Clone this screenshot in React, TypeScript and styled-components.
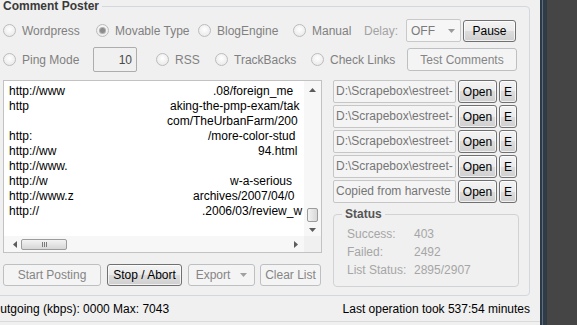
import React from "react";
import styled, { createGlobalStyle } from "styled-components";

const GlobalStyle = createGlobalStyle`
  html, body {
    margin: 0;
    padding: 0;
  }
  body {
    width: 577px;
    height: 325px;
    overflow: hidden;
    background: #454545;
    font-family: "Liberation Sans", Arial, sans-serif;
    font-size: 12px;
  }
`;

const Screen = styled.div`
  display: flex;
  width: 577px;
  height: 325px;
  overflow: hidden;
`;

const Window = styled.div`
  width: 540px;
  height: 325px;
  flex-shrink: 0;
  background: #f0f0f0;
  display: flex;
  flex-direction: column;
  overflow: hidden;
`;

const FrameEdge = styled.div`
  width: 7px;
  flex-shrink: 0;
  background: linear-gradient(
    to right,
    #2c3a48 0 2px,
    #5d6d7d 2px 3px,
    #2f3b47 3px
  );
`;

const Desktop = styled.div`
  flex: 1;
  background: #454545;
`;

const Panel = styled.fieldset`
  margin: 0 0 0 -6px;
  width: 536px;
  height: 296px;
  min-width: 0;
  flex-shrink: 0;
  box-sizing: border-box;
  border: 1px solid #d2d8dd;
  border-radius: 4px;
  padding: 8px 10px 0 8px;
`;

const Legend = styled.legend`
  padding: 0 3px;
  margin-left: -3px;
  font-weight: bold;
  font-size: 12px;
  line-height: 12px;
  color: #3a3a3a;
`;

const OptionRow = styled.div<{ $h: number; $mt?: number }>`
  display: flex;
  align-items: center;
  height: ${(p) => p.$h}px;
  margin-top: ${(p) => p.$mt ?? 0}px;
`;

const RadioItem = styled.label<{ $w: number }>`
  display: flex;
  align-items: center;
  gap: 6px;
  width: ${(p) => p.$w}px;
  flex-shrink: 0;
  color: #808080;
  white-space: nowrap;
`;

const RadioDot = styled.span<{ $on?: boolean }>`
  width: 11px;
  height: 11px;
  border-radius: 50%;
  border: 1px solid #bcbcbc;
  background: radial-gradient(circle at 50% 40%, #ffffff 0%, #e4e4e4 100%);
  display: flex;
  align-items: center;
  justify-content: center;
  flex-shrink: 0;
  &::after {
    content: "";
    width: 5px;
    height: 5px;
    border-radius: 50%;
    background: ${(p) => (p.$on ? "#8c8c8c" : "transparent")};
    box-shadow: ${(p) => (p.$on ? "0 0 0 1px #b0b0b0" : "none")};
  }
`;

const FieldLabel = styled.span<{ $w: number }>`
  width: ${(p) => p.$w}px;
  flex-shrink: 0;
  color: #a3a3a3;
`;

const Select = styled.div`
  width: 55px;
  height: 23px;
  box-sizing: border-box;
  border: 1px solid #c9c9c9;
  border-radius: 2px;
  background: #f6f6f6;
  color: #7b7b7b;
  display: flex;
  align-items: center;
  justify-content: space-between;
  padding: 0 5px 0 4px;
  margin-right: 2px;
  flex-shrink: 0;
`;

const NumberBox = styled.div`
  width: 44px;
  height: 25px;
  box-sizing: border-box;
  border: 1px solid #adadad;
  border-radius: 2px;
  background: #f0f0f0;
  color: #4a4a4a;
  display: flex;
  align-items: center;
  justify-content: flex-end;
  padding-right: 4px;
  margin-right: 19px;
  flex-shrink: 0;
`;

const Button = styled.div<{ $w: number; $h?: number; $off?: boolean }>`
  width: ${(p) => p.$w}px;
  height: ${(p) => p.$h ?? 22}px;
  box-sizing: border-box;
  flex-shrink: 0;
  display: flex;
  align-items: center;
  justify-content: center;
  gap: 10px;
  border-radius: 3px;
  white-space: nowrap;
  border: 1px solid ${(p) => (p.$off ? "#bcc0c3" : "#707070")};
  background: ${(p) =>
    p.$off
      ? "#f4f4f4"
      : "linear-gradient(#f3f3f3 0%, #ebebeb 50%, #dddddd 50%, #cfcfcf 100%)"};
  color: ${(p) => (p.$off ? "#858585" : "#000000")};
  box-shadow: ${(p) => (p.$off ? "none" : "inset 0 0 0 1px rgba(255,255,255,0.7)")};
`;

const Bottom = styled.div`
  display: grid;
  grid-template-columns: 319px 186px;
  column-gap: 11px;
  margin-top: 8px;
`;

const LeftCol = styled.div`
  display: flex;
  flex-direction: column;
`;

const RightCol = styled.div`
  display: flex;
  flex-direction: column;
`;

const ListBox = styled.div`
  width: 319px;
  height: 173px;
  box-sizing: border-box;
  border: 1px solid #c2c2c2;
  background: #ffffff;
  display: grid;
  grid-template-columns: 1fr 17px;
  grid-template-rows: 1fr 16px;
`;

const Viewport = styled.div`
  overflow: hidden;
  padding: 3px 0 0 5px;
`;

const UrlLine = styled.div<{ $x: number }>`
  display: grid;
  grid-template-columns: ${(p) => p.$x - 9}px max-content;
  height: 15px;
  line-height: 15px;
  white-space: nowrap;
  color: #000;
`;

const UrlPart = styled.span`
  overflow: hidden;
`;

const VScroll = styled.div`
  background: #f7f7f7;
  display: flex;
  flex-direction: column;
  align-items: center;
  padding: 7px 0 4px;
  box-sizing: border-box;
`;

const HScroll = styled.div`
  background: #f7f7f7;
  display: flex;
  align-items: center;
  padding: 0 6px 0 9px;
  box-sizing: border-box;
`;

const Corner = styled.div`
  background: #f0f0f0;
`;

const VThumb = styled.div`
  width: 11px;
  height: 14px;
  margin-top: auto;
  margin-bottom: 6px;
  box-sizing: border-box;
  border: 1px solid #9c9c9c;
  border-radius: 2px;
  background: linear-gradient(to right, #f3f3f3, #d8d8d8);
`;

const HThumb = styled.div`
  width: 46px;
  height: 11px;
  margin-left: 4px;
  box-sizing: border-box;
  border: 1px solid #9c9c9c;
  border-radius: 2px;
  background: linear-gradient(#f3f3f3, #d6d6d6);
  display: flex;
  align-items: center;
  justify-content: center;
  gap: 1px;
  margin-right: auto;
`;

const Grip = styled.span`
  width: 1px;
  height: 5px;
  background: #7a7a7a;
`;

const ActionRow = styled.div`
  display: flex;
  margin-top: 11px;
  gap: 6px;
`;

const PathList = styled.div`
  display: flex;
  flex-direction: column;
  gap: 2px;
`;

const PathRow = styled.div`
  display: flex;
  gap: 2px;
  height: 23px;
`;

const PathBox = styled.div`
  width: 123px;
  height: 23px;
  box-sizing: border-box;
  border: 1px solid #c6c6c6;
  border-radius: 2px;
  background: #f4f4f4;
  color: #767676;
  padding-left: 2px;
  line-height: 21px;
  white-space: nowrap;
  overflow: hidden;
`;

const StatusBox = styled.fieldset`
  margin: 6px 0 0;
  width: 186px;
  height: 78px;
  min-width: 0;
  box-sizing: border-box;
  border: 1px solid #cfd3d6;
  border-radius: 4px;
  padding: 6px 0 0 13px;
`;

const StatusLegend = styled.legend`
  padding: 0 3px;
  margin-left: -5px;
  font-weight: bold;
  line-height: 10px;
  color: #555555;
`;

const StatLine = styled.div`
  display: grid;
  grid-template-columns: 67px auto;
  height: 18px;
  line-height: 18px;
  color: #a6a6a6;
`;

const StatusBar = styled.div`
  height: 26px;
  box-sizing: border-box;
  border-bottom: 1px solid #dadada;
  display: flex;
  align-items: center;
  justify-content: space-between;
  padding-right: 10px;
  color: #000;
  white-space: nowrap;
`;

const StatusText = styled.span<{ $ml?: number }>`
  margin-left: ${(p) => p.$ml ?? 0}px;
`;

const Arrow = ({ dir, color = "#5c5c5c" }: { dir: "up" | "down" | "left" | "right"; color?: string }) => {
  const pts = {
    up: "0,4 3.5,0 7,4",
    down: "0,0 3.5,4 7,0",
    left: "4,0 0,3.5 4,7",
    right: "0,0 4,3.5 0,7",
  }[dir];
  const vertical = dir === "up" || dir === "down";
  return (
    <svg width={vertical ? 7 : 4} height={vertical ? 4 : 7} viewBox={vertical ? "0 0 7 4" : "0 0 4 7"}>
      <polygon points={pts} fill={color} />
    </svg>
  );
};

const urls: { left: string; right: string; x: number }[] = [
  { left: "http://www", right: ".08/foreign_me", x: 213 },
  { left: "http", right: "aking-the-pmp-exam/tak", x: 170 },
  { left: "", right: "com/TheUrbanFarm/200", x: 167 },
  { left: "http:", right: "/more-color-stud", x: 208 },
  { left: "http://ww", right: "94.html", x: 258 },
  { left: "http://www.", right: "", x: 290 },
  { left: "http://w", right: "w-a-serious", x: 230 },
  { left: "http://www.z", right: "archives/2007/04/0", x: 193 },
  { left: "http://", right: ".2006/03/review_w", x: 202 },
];

const paths = [
  "D:\\Scrapebox\\estreet-",
  "D:\\Scrapebox\\estreet-",
  "D:\\Scrapebox\\estreet-",
  "D:\\Scrapebox\\estreet-",
  "Copied from harveste",
];

export default function App() {
  return (
    <>
      <GlobalStyle />
      <Screen>
        <Window>
          <Panel>
            <Legend>Comment Poster</Legend>
            <OptionRow $h={23} $mt={-1}>
              <RadioItem $w={93}>
                <RadioDot />
                Wordpress
              </RadioItem>
              <RadioItem $w={102}>
                <RadioDot $on />
                Movable Type
              </RadioItem>
              <RadioItem $w={95}>
                <RadioDot />
                BlogEngine
              </RadioItem>
              <RadioItem $w={71}>
                <RadioDot />
                Manual
              </RadioItem>
              <FieldLabel $w={42}>Delay:</FieldLabel>
              <Select>
                OFF
                <Arrow dir="down" color="#9a9a9a" />
              </Select>
              <Button $w={53} $h={22}>
                Pause
              </Button>
            </OptionRow>
            <OptionRow $h={25} $mt={5}>
              <RadioItem $w={90}>
                <RadioDot />
                Ping Mode
              </RadioItem>
              <NumberBox>10</NumberBox>
              <RadioItem $w={59}>
                <RadioDot />
                RSS
              </RadioItem>
              <RadioItem $w={96}>
                <RadioDot />
                TrackBacks
              </RadioItem>
              <RadioItem $w={96}>
                <RadioDot />
                Check Links
              </RadioItem>
              <Button $w={110} $h={23} $off>
                Test Comments
              </Button>
            </OptionRow>
            <Bottom>
              <LeftCol>
                <ListBox>
                  <Viewport>
                    {urls.map((u, i) => (
                      <UrlLine key={i} $x={u.x}>
                        <UrlPart>{u.left}</UrlPart>
                        <span>{u.right}</span>
                      </UrlLine>
                    ))}
                  </Viewport>
                  <VScroll>
                    <Arrow dir="up" />
                    <VThumb />
                    <Arrow dir="down" />
                  </VScroll>
                  <HScroll>
                    <Arrow dir="left" />
                    <HThumb>
                      <Grip />
                      <Grip />
                      <Grip />
                    </HThumb>
                    <Arrow dir="right" />
                  </HScroll>
                  <Corner />
                </ListBox>
                <ActionRow>
                  <Button $w={98} $off>
                    Start Posting
                  </Button>
                  <Button $w={75}>Stop / Abort</Button>
                  <Button $w={67} $off>
                    Export
                    <Arrow dir="down" color="#a0a0a0" />
                  </Button>
                  <Button $w={61} $off style={{ marginLeft: -1 }}>
                    Clear List
                  </Button>
                </ActionRow>
              </LeftCol>
              <RightCol>
                <PathList>
                  {paths.map((p, i) => (
                    <PathRow key={i}>
                      <PathBox>{p}</PathBox>
                      <Button $w={39} $h={23}>
                        Open
                      </Button>
                      <Button $w={18} $h={23}>
                        E
                      </Button>
                    </PathRow>
                  ))}
                </PathList>
                <StatusBox>
                  <StatusLegend>Status</StatusLegend>
                  <StatLine>
                    <span>Success:</span>
                    <span>403</span>
                  </StatLine>
                  <StatLine>
                    <span>Failed:</span>
                    <span>2492</span>
                  </StatLine>
                  <StatLine>
                    <span>List Status:</span>
                    <span>2895/2907</span>
                  </StatLine>
                </StatusBox>
              </RightCol>
            </Bottom>
          </Panel>
          <StatusBar>
            <StatusText $ml={-9}>Outgoing (kbps): 0000 Max: 7043</StatusText>
            <StatusText>Last operation took 537:54 minutes</StatusText>
          </StatusBar>
        </Window>
        <FrameEdge />
        <Desktop />
      </Screen>
    </>
  );
}
